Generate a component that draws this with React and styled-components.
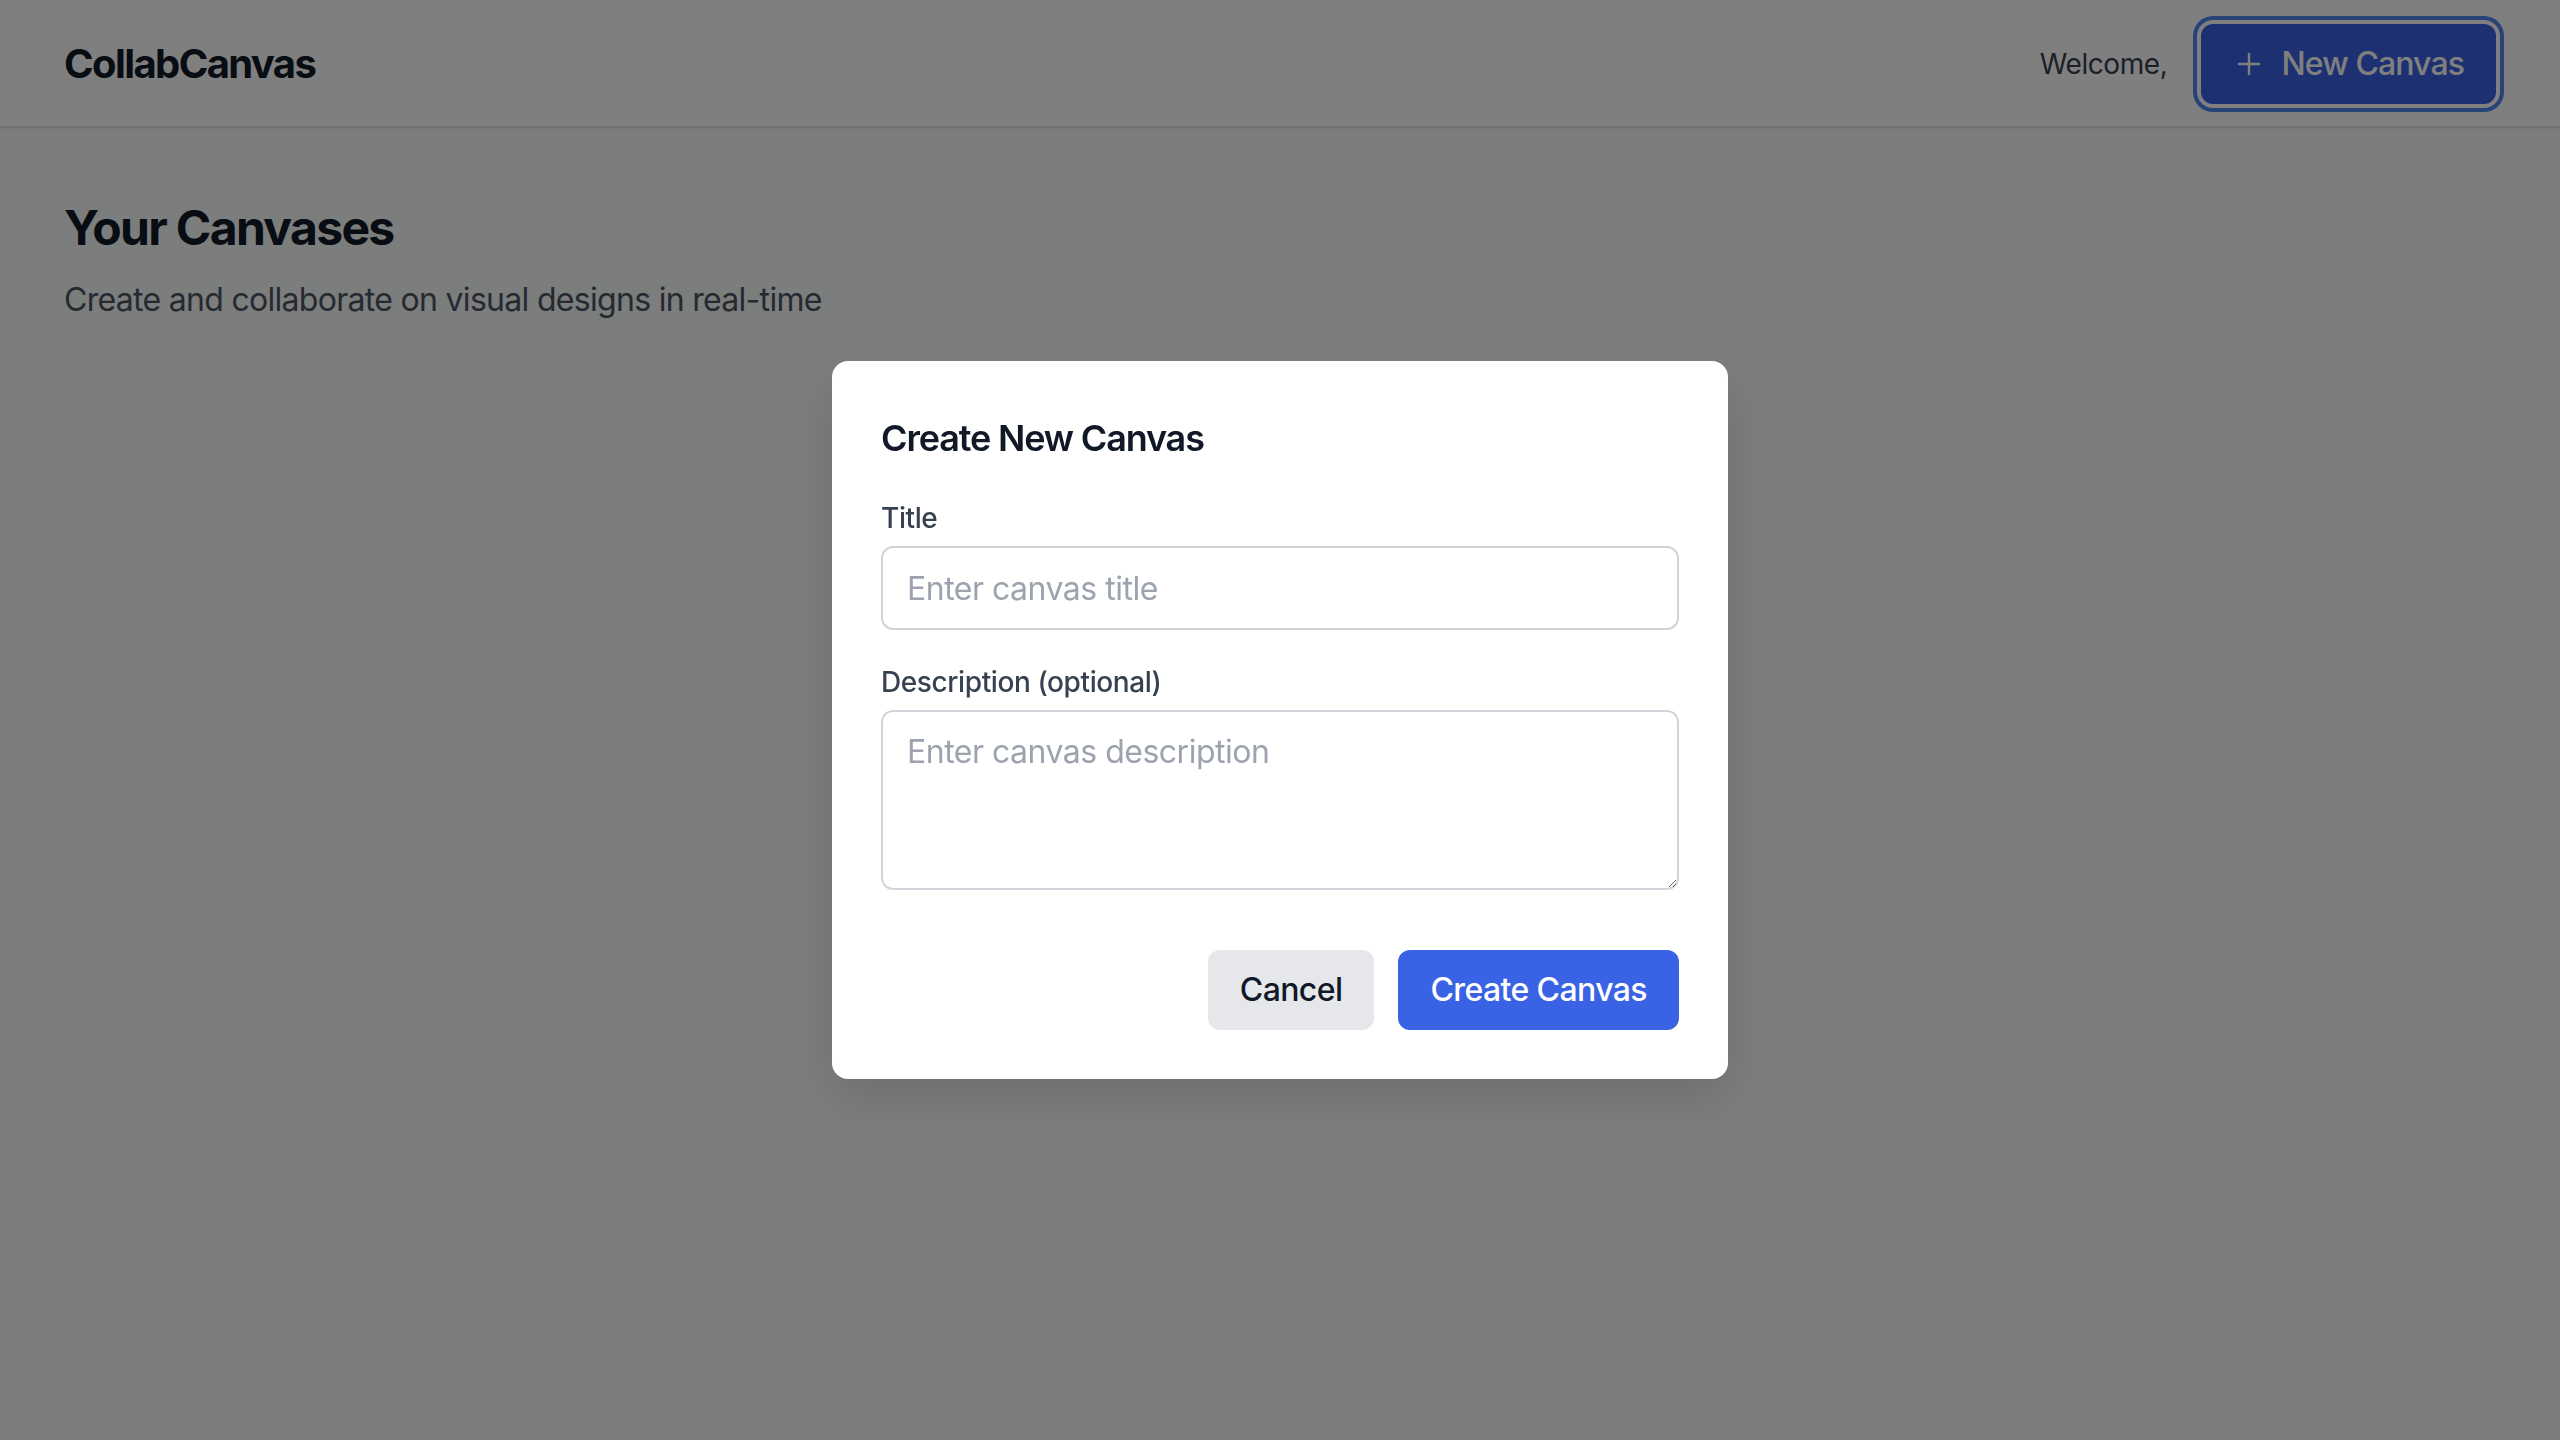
import React from "react";
import styled, { createGlobalStyle } from "styled-components";

const GlobalStyle = createGlobalStyle`
  * { box-sizing: border-box; }
  html, body { margin: 0; padding: 0; }
  body {
    font-family: Inter, "Noto Sans", "Liberation Sans", sans-serif;
    background: #f9fafb;
    color: #111827;
  }
`;

const Page = styled.div`
  min-height: 100vh;
  background: #f9fafb;
`;

const Header = styled.header`
  height: 128px;
  background: #ffffff;
  border-bottom: 2px solid #e5e7eb;
  box-shadow: 0 2px 4px rgba(0, 0, 0, 0.05);
  display: flex;
  align-items: center;
  justify-content: space-between;
  padding: 2px 64px 0;
`;

const Logo = styled.div`
  font-size: 40px;
  line-height: 56px;
  font-weight: 700;
  color: #111827;
  letter-spacing: -1.6px;
`;

const HeaderRight = styled.div`
  display: flex;
  align-items: center;
  gap: 34px;
`;

const Welcome = styled.span`
  font-size: 28px;
  line-height: 40px;
  color: #374151;
  letter-spacing: -0.4px;
`;

const PrimaryButton = styled.button`
  display: inline-flex;
  align-items: center;
  gap: ${(p) => (p.$icon ? "16px" : "0")};
  padding: 16px 32px;
  border: none;
  border-radius: 12px;
  background: #3a62e4;
  color: #ffffff;
  font-family: inherit;
  font-size: 32px;
  line-height: 48px;
  font-weight: 500;
  letter-spacing: ${(p) => (p.$icon ? "-0.9px" : "-0.6px")};
  cursor: pointer;
  box-shadow: ${(p) =>
    p.$focused ? "0 0 0 4px #ffffff, 0 0 0 8px #4f86ee" : "none"};
`;

const SecondaryButton = styled.button`
  display: inline-flex;
  align-items: center;
  padding: 16px 32px;
  border: none;
  border-radius: 12px;
  background: #e5e7eb;
  color: #111827;
  font-family: inherit;
  font-size: 32px;
  line-height: 48px;
  font-weight: 500;
  letter-spacing: -0.6px;
  cursor: pointer;
`;

const Main = styled.main`
  padding: 68px 64px;
`;

const PageTitle = styled.h1`
  margin: 0 0 16px;
  font-size: 48px;
  line-height: 64px;
  font-weight: 700;
  color: #111827;
  letter-spacing: -1.65px;
`;

const PageSubtitle = styled.p`
  margin: 0;
  font-size: 32px;
  line-height: 48px;
  color: #4b5563;
  letter-spacing: -0.7px;
`;

const Overlay = styled.div`
  position: fixed;
  inset: 0;
  background: rgba(0, 0, 0, 0.5);
  display: flex;
  align-items: center;
  justify-content: center;
`;

const Modal = styled.div`
  width: 896px;
  background: #ffffff;
  border-radius: 16px;
  padding: 49px 49px 49px;
  box-shadow: 0 20px 50px rgba(0, 0, 0, 0.12);
`;

const ModalTitle = styled.h2`
  margin: 0 0 32px;
  font-size: 36px;
  line-height: 56px;
  font-weight: 600;
  color: #111827;
  letter-spacing: -1.15px;
`;

const Field = styled.div`
  margin-bottom: ${(p) => p.$gap || "32px"};
`;

const Label = styled.label`
  display: block;
  margin-bottom: 8px;
  font-size: 28px;
  line-height: 40px;
  font-weight: 500;
  color: #374151;
  letter-spacing: -0.4px;
`;

const fieldCss = `
  display: block;
  width: 100%;
  padding: 16px 24px;
  border: 2px solid #d1d5db;
  border-radius: 12px;
  font-family: Inter, "Noto Sans", "Liberation Sans", sans-serif;
  font-size: 32px;
  line-height: 48px;
  color: #111827;
  background: #ffffff;
  outline: none;
  letter-spacing: -0.5px;
  &::placeholder { color: #9ca3af; }
`;

const TextInput = styled.input`
  ${fieldCss}
  height: 84px;
`;

const TextArea = styled.textarea`
  ${fieldCss}
  height: 180px;
  resize: vertical;
`;

const Actions = styled.div`
  display: flex;
  justify-content: flex-end;
  gap: 24px;
`;

const PlusIcon = () => (
  <svg
    width="32"
    height="32"
    viewBox="0 0 24 24"
    fill="none"
    stroke="currentColor"
    strokeWidth="1.8"
    strokeLinecap="round"
    strokeLinejoin="round"
    aria-hidden="true"
  >
    <path d="M12 4.5v15M19.5 12h-15" />
  </svg>
);

export default function App() {
  return (
    <>
      <GlobalStyle />
      <Page>
        <Header>
          <Logo>CollabCanvas</Logo>
          <HeaderRight>
            <Welcome>Welcome,</Welcome>
            <PrimaryButton $icon $focused>
              <PlusIcon />
              New Canvas
            </PrimaryButton>
          </HeaderRight>
        </Header>
        <Main>
          <PageTitle>Your Canvases</PageTitle>
          <PageSubtitle>Create and collaborate on visual designs in real-time</PageSubtitle>
        </Main>
      </Page>
      <Overlay>
        <Modal>
          <ModalTitle>Create New Canvas</ModalTitle>
          <Field>
            <Label htmlFor="title">Title</Label>
            <TextInput id="title" placeholder="Enter canvas title" />
          </Field>
          <Field $gap="60px">
            <Label htmlFor="desc">Description (optional)</Label>
            <TextArea id="desc" rows={3} placeholder="Enter canvas description" />
          </Field>
          <Actions>
            <SecondaryButton>Cancel</SecondaryButton>
            <PrimaryButton>Create Canvas</PrimaryButton>
          </Actions>
        </Modal>
      </Overlay>
    </>
  );
}
